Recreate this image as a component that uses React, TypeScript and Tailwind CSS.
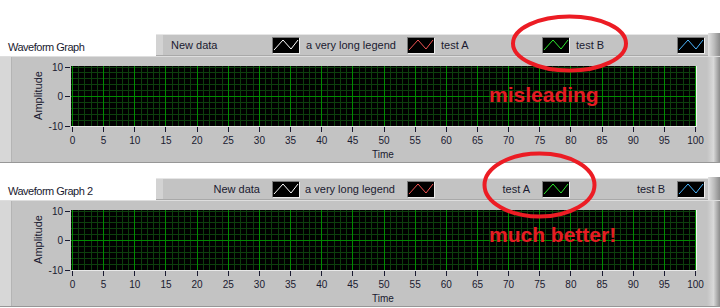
import React from 'react';

// LabVIEW-style waveform graphs with legend alignment annotations

const LEGEND = [
  { label: 'New data', color: '#ffffff' },
  { label: 'a very long legend', color: '#f25454' },
  { label: 'test A', color: '#2ee82e' },
  { label: 'test B', color: '#4cb6ff' },
];

const X0 = 60;
const X1 = 683;
const sx = (v: number) => X0 + (v * (X1 - X0)) / 100;
const sy = (v: number) => 39 - v * 2.95;
const px = (n: number) => Math.round(n) + 0.5;

const Swatch: React.FC<{ color: string }> = ({ color }) => (
  <div className="w-[28px] h-[17px] shrink-0 bg-black border-t border-l border-[#7a7a7a] border-r border-b border-r-[#ececec] border-b-[#ececec]">
    <svg width="26" height="15" viewBox="0 0 26 15" className="block">
      <path d="M1 12 L10 2 L18 11 L25 2" fill="none" stroke={color} strokeWidth="1" />
    </svg>
  </div>
);

const Chart: React.FC = () => {
  const units = Array.from({ length: 101 }, (_, i) => i);
  const rows = Array.from({ length: 11 }, (_, i) => -10 + i * 2);
  const majors = Array.from({ length: 21 }, (_, i) => i * 5);

  return (
    <svg width="695" height="107" className="block shrink-0" shapeRendering="crispEdges">
      <rect x="59" y="9" width="625" height="60" fill="#000" />
      {units
        .filter((i) => i % 5 !== 0)
        .map((i) => (
          <line key={`m${i}`} x1={px(sx(i))} x2={px(sx(i))} y1="9" y2="69" stroke="#0d3f0d" />
        ))}
      {rows
        .filter((v) => v !== 0)
        .map((v) => (
          <line key={`h${v}`} x1="59" x2="684" y1={px(sy(v))} y2={px(sy(v))} stroke="#0d3f0d" />
        ))}
      {majors.map((i) => (
        <line key={`M${i}`} x1={px(sx(i))} x2={px(sx(i))} y1="9" y2="69" stroke="#008c00" />
      ))}
      <line x1="59" x2="684" y1={px(sy(0))} y2={px(sy(0))} stroke="#008c00" />

      {/* sunken frame */}
      <line x1="684.5" x2="684.5" y1="9" y2="70" stroke="#f4f4f4" />
      <line x1="59" x2="685" y1="69.5" y2="69.5" stroke="#e8e8e8" />

      {/* y axis */}
      {[10, 0, -10].map((v) => (
        <g key={`y${v}`}>
          <line x1="53" x2="58" y1={px(sy(v))} y2={px(sy(v))} stroke="#1a1a30" />
          <text
            x="51"
            y={sy(v) + 4}
            textAnchor="end"
            fontSize="10"
            fill="#1a1a30"
            fontFamily="'Liberation Sans', Arial, sans-serif"
          >
            {v}
          </text>
        </g>
      ))}
      <text
        x="0"
        y="0"
        transform="translate(30 38.5) rotate(-90)"
        textAnchor="middle"
        fontSize="11"
        fill="#1a1a30"
        fontFamily="'Liberation Sans', Arial, sans-serif"
      >
        Amplitude
      </text>

      {/* x axis */}
      {majors.map((i) => (
        <g key={`x${i}`}>
          <line x1={px(sx(i))} x2={px(sx(i))} y1="70" y2="75" stroke="#1a1a30" />
          <text
            x={sx(i) + 0.5}
            y="87"
            textAnchor="middle"
            fontSize="10"
            fill="#1a1a30"
            fontFamily="'Liberation Sans', Arial, sans-serif"
          >
            {i}
          </text>
        </g>
      ))}
      <text x="360" y="101" fontSize="10" fill="#1a1a30" fontFamily="'Liberation Sans', Arial, sans-serif">
        Time
      </text>
    </svg>
  );
};

const Graph: React.FC<{ title: string; rightAlign?: boolean }> = ({ title, rightAlign }) => (
  <div>
    <div className="flex h-[22px]">
      <div className="w-[156px] shrink-0 flex items-end pl-[8px] pb-[2px] text-[11px] tracking-[-0.5px] text-[#1a1a30] leading-[14px]">
        {title}
      </div>
      <div className="w-[552px] shrink-0 flex bg-[#c3c3c3] border-t border-[#e6e6e6] border-b border-b-[#a9a9a9]">
        <div className="w-[7px] shrink-0 bg-[#d3d3d3]" />
        <div className="flex pl-[3px] items-center">
          {LEGEND.map((e) => (
            <div key={e.label} className="w-[135px] shrink-0 flex items-center">
              <div
                className={`w-[106px] shrink-0 text-[11px] text-[#1a1a30] whitespace-nowrap ${
                  rightAlign ? 'text-right pr-[12px]' : 'pl-[5px]'
                }`}
              >
                {e.label}
              </div>
              <Swatch color={e.color} />
            </div>
          ))}
        </div>
      </div>
      <div className="w-[12px] shrink-0 mt-[-1px] bg-linear-to-r from-[#e2e2e2] via-[#bcbcbc] to-[#8c8c8c]" />
    </div>
    <div className="flex h-[107px] bg-[#c3c3c3] border-t border-[#dedede] border-b border-b-[#979797]">
      <div className="w-[12px] shrink-0 bg-[#d7d7d7] border-r border-[#b4b4b4]" />
      <Chart />
      <div className="w-[13px] shrink-0 bg-linear-to-r from-[#c3c3c3] via-[#d9d9d9] to-[#8c8c8c]" />
    </div>
  </div>
);

export default function App() {
  return (
    <div className="relative w-[720px] h-[308px] overflow-hidden bg-white font-['Liberation_Sans',Arial,sans-serif]">
      <div className="pt-[34px] flex flex-col gap-[15px]">
        <Graph title="Waveform Graph" />
        <Graph title="Waveform Graph 2" rightAlign />
      </div>

      {/* annotations drawn over the screenshot */}
      <svg className="absolute inset-0 pointer-events-none" width="720" height="308">
        <ellipse cx="569.5" cy="43.5" rx="56.5" ry="27" fill="none" stroke="#ec1c24" strokeWidth="4" />
        <ellipse cx="539.5" cy="185" rx="55" ry="31.5" fill="none" stroke="#ec1c24" strokeWidth="4" />
      </svg>
      <div className="absolute left-[489px] top-[84px] text-[21px] leading-none font-bold text-[#e51c23]">
        misleading
      </div>
      <div className="absolute left-[489px] top-[224px] text-[21px] leading-none font-bold text-[#e51c23]">
        much better!
      </div>
    </div>
  );
}
